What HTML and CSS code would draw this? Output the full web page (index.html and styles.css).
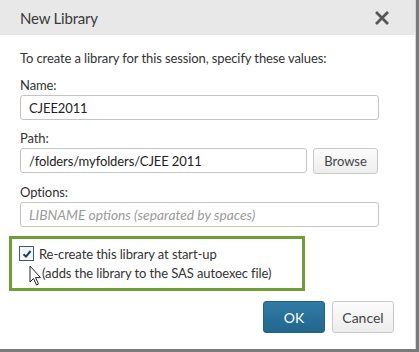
FILE: index.html
```html
<!DOCTYPE html>
<html lang="en">
<head>
    <meta charset="UTF-8">
    <title>New Library</title>
    <link rel="stylesheet" href="styles.css">
</head>
<body>
    <div class="dialog">
        <div class="dialog-header">
            <span class="dialog-title">New Library</span>
            <svg class="close-icon" width="14" height="14" viewBox="0 0 14 14">
                <path d="M2 2 L12 12 M12 2 L2 12" stroke="#555" stroke-width="2.8" stroke-linecap="square"/>
            </svg>
        </div>

        <div class="dialog-body">
            <p class="intro">To create a library for this session, specify these values:</p>

            <div class="field">
                <label class="field-label">Name:</label>
                <input class="text-input" type="text" value="CJEE2011">
            </div>

            <div class="field">
                <label class="field-label">Path:</label>
                <div class="path-row">
                    <input class="text-input" type="text" value="/folders/myfolders/CJEE 2011">
                    <button class="btn btn-browse">Browse</button>
                </div>
            </div>

            <div class="field">
                <label class="field-label">Options:</label>
                <input class="text-input" type="text" placeholder="LIBNAME options (separated by spaces)">
            </div>

            <div class="highlight">
                <div class="check-row">
                    <span class="checkbox">
                        <svg width="10" height="10" viewBox="0 0 10 10">
                            <path d="M1.5 5.2 L4 7.6 L8.6 2" fill="none" stroke="#1f3d55" stroke-width="2"/>
                        </svg>
                    </span>
                    <div class="check-text">
                        <div>Re-create this library at start-up</div>
                        <div class="check-note">(adds the library to the SAS autoexec file)</div>
                    </div>
                </div>
                <!-- mouse pointer over the checkbox label -->
                <svg class="cursor" width="13" height="21" viewBox="0 0 13 21">
                    <path d="M1 1 L1 17 L4.5 13.5 L7.5 20 L9.5 19 L6.6 12.6 L11.5 12.6 Z" fill="#fff" stroke="#222" stroke-width="1"/>
                </svg>
            </div>

            <div class="dialog-footer">
                <button class="btn btn-primary">OK</button>
                <button class="btn">Cancel</button>
            </div>
        </div>
    </div>
</body>
</html>
```

FILE: styles.css
```css
body {
    margin: 0;
    background: #7a7a7a;
    font-family: Lato, 'Open Sans', sans-serif;
    color: #333;
}

.dialog {
    width: 416px;
    height: 349px;
    background: #fff;
    border-right: 1px solid #d8d8d8;
    box-sizing: border-box;
}

.dialog-header {
    height: 35px;
    background: #e8e8e8;
    padding: 0 26px 0 20px;
    display: flex;
    align-items: center;
    justify-content: space-between;
}

.dialog-title {
    font-size: 15px;
    letter-spacing: -0.2px;
    color: #3a3a3a;
}

.dialog-body {
    padding: 13px 20px 0 20px;
    font-size: 13px;
    letter-spacing: -0.1px;
}

.intro {
    margin: 0 0 8px 0;
    line-height: 20px;
}

.field {
    margin-bottom: 9px;
}

.field-label {
    display: block;
    line-height: 18px;
    margin-bottom: 1px;
}

.text-input {
    display: block;
    width: 359px;
    height: 25px;
    box-sizing: border-box;
    border: 1px solid #c4c4c4;
    border-radius: 3px;
    padding: 0 8px;
    font-family: inherit;
    font-size: 13px;
    letter-spacing: -0.1px;
    color: #222;
}

.text-input::placeholder {
    color: #9a9a9a;
    font-style: italic;
    font-size: 13.8px;
    letter-spacing: 0;
}

.path-row {
    display: flex;
    gap: 6px;
}

.path-row .text-input {
    width: 287px;
}

.btn {
    height: 32px;
    width: 62px;
    box-sizing: border-box;
    border: 1px solid #c8c8c8;
    border-radius: 3px;
    background: linear-gradient(#fcfcfc, #ededed);
    font-family: inherit;
    font-size: 14px;
    color: #444;
}

.btn-browse {
    height: 26px;
    width: 65px;
    font-size: 13px;
}

.btn-primary {
    background: linear-gradient(#2f7ba6, #23668d);
    border-color: #22618a;
    color: #fff;
}

.highlight {
    position: relative;
    margin: 9px 0 0 -11px;
    width: 296px;
    box-sizing: border-box;
    border: 3px solid #6d9e37;
    padding: 6px 7px 5px 7px;
}

.check-row {
    display: flex;
    gap: 5px;
    line-height: 19px;
}

.checkbox {
    flex: none;
    width: 15px;
    height: 15px;
    box-sizing: border-box;
    border: 1px solid #3d5a72;
    background: #f4f7fa;
    display: flex;
    align-items: center;
    justify-content: center;
    margin-top: 1px;
}

.check-note {
    padding-left: 3px;
}

.cursor {
    position: absolute;
    left: 17px;
    top: 26px;
}

.dialog-footer {
    display: flex;
    justify-content: flex-end;
    gap: 7px;
    margin: 10px 1px 0 0;
}
```
